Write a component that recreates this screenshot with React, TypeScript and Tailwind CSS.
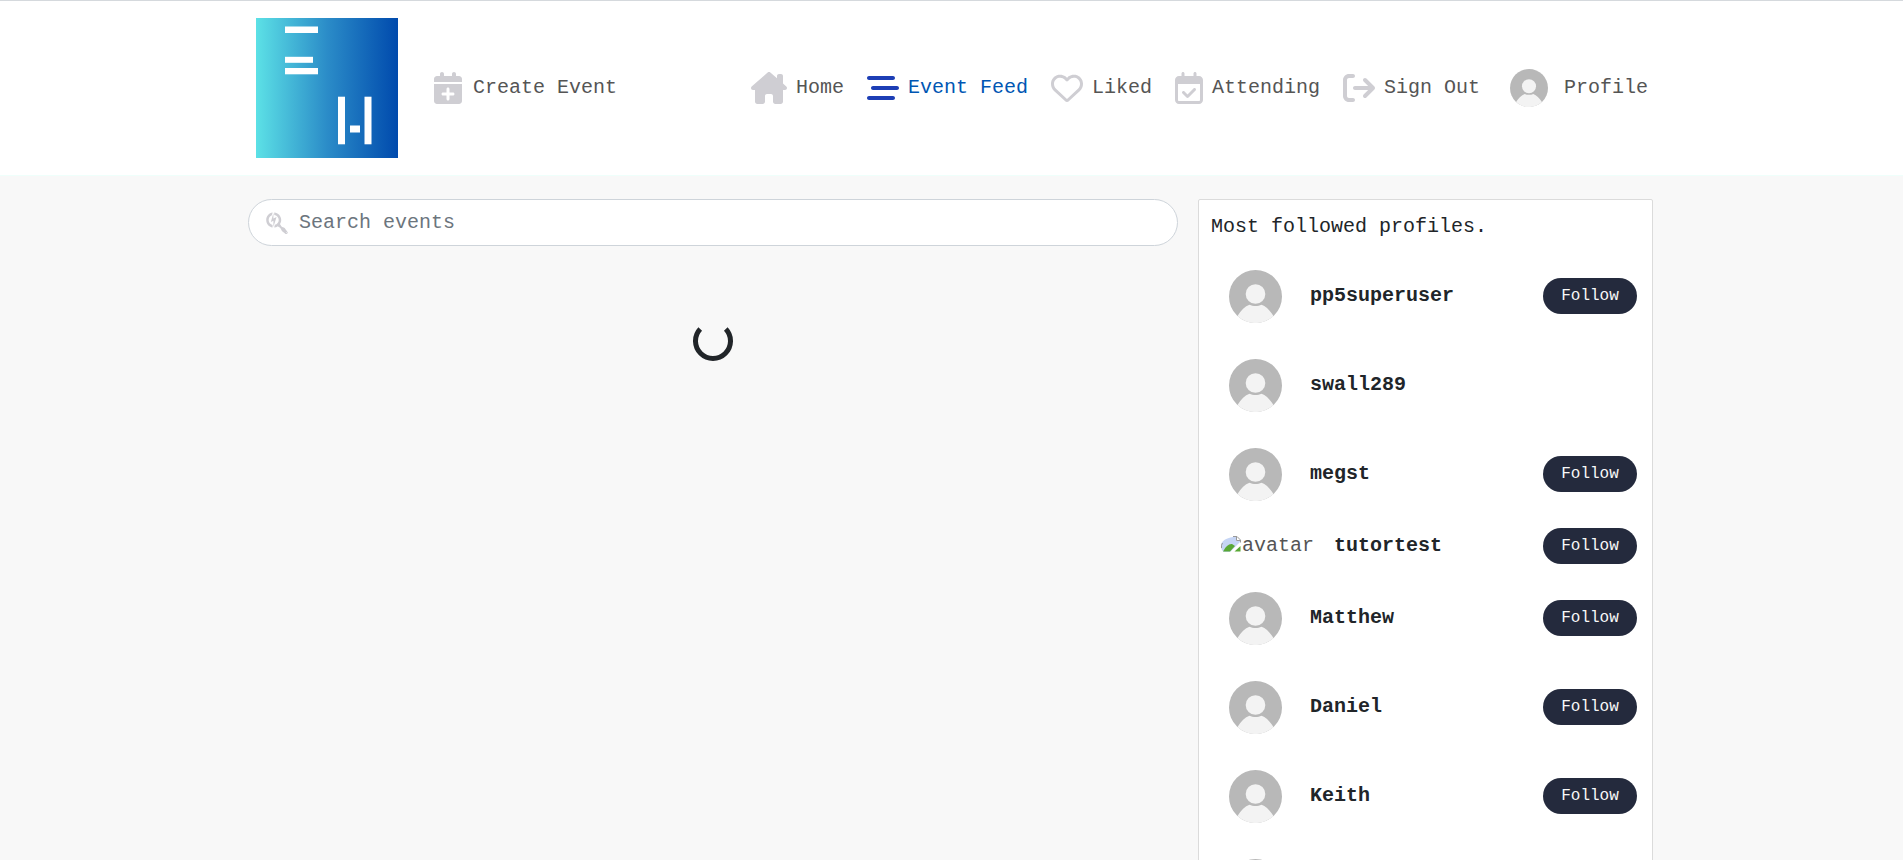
import type { ReactNode } from "react";
import {
  FaArrowRightFromBracket,
  FaBarsStaggered,
  FaCalendarPlus,
  FaHouseChimney,
  FaRegCalendarCheck,
  FaRegHeart,
  FaSearchengin,
} from "react-icons/fa6";

type Profile = { id: number; name?: string; followable?: boolean; missingImage?: boolean };

const profiles: Profile[] = [
  { id: 1, name: "pp5superuser", followable: true },
  { id: 2, name: "swall289" },
  { id: 3, name: "megst", followable: true },
  { id: 4, name: "tutortest", followable: true, missingImage: true },
  { id: 5, name: "Matthew", followable: true },
  { id: 6, name: "Daniel", followable: true },
  { id: 7, name: "Keith", followable: true },
  { id: 8 },
];

function Avatar({ className }: { className: string }) {
  return (
    <svg viewBox="0 0 53 53" className={className} aria-hidden="true">
      <circle cx="26.5" cy="26.5" r="26.5" fill="#b8b8b8" />
      <circle cx="26.5" cy="24" r="9.8" fill="#f3f3f3" />
      <path
        d="M8.5 46C12 40.5 16 36.3 20.5 34.8C24 36.4 29 36.4 32.5 34.8C37 36.3 41 40.5 44.5 46A26.5 26.5 0 0 1 8.5 46Z"
        fill="#f3f3f3"
      />
    </svg>
  );
}

function MissingImage() {
  return (
    <svg viewBox="0 0 20 17" className="mb-[5px] h-[17px] w-5 shrink-0" aria-hidden="true">
      <path d="M0 11C0 6 5 3 12 2H15V6H19V7L9 17H3Q0 15 0 11Z" fill="#c5d5f5" />
      <path d="M2 16.5Q6 8.5 11 9L14 11L9 16.5Z" fill="#58a835" />
      <path d="M19.5 11V16.5H13.5Z" fill="#58a835" />
      <path d="M0.5 13Q0 10 1.5 8M12 1.5H16L19.5 5V7.5M15.5 1.5V5.5H19.5" fill="none" stroke="#999" />
    </svg>
  );
}

function Logo() {
  return (
    <svg viewBox="0 0 142 140" className="h-[140px] w-[142px]" role="img" aria-label="Logo">
      <defs>
        <linearGradient id="logo-fill" x1="0" x2="1" y1="0" y2="0">
          <stop offset="0" stopColor="#5ce1e6" />
          <stop offset="0.5" stopColor="#2b8cc8" />
          <stop offset="1" stopColor="#004aad" />
        </linearGradient>
      </defs>
      <rect width="142" height="140" fill="url(#logo-fill)" />
      <g fill="#fff">
        <rect x="29" y="8.5" width="33" height="6.5" />
        <rect x="29" y="38.8" width="28" height="6" />
        <rect x="29" y="50" width="33" height="6.3" />
        <rect x="82" y="78.7" width="7" height="47.6" />
        <rect x="108.5" y="78.7" width="7" height="47.6" />
        <rect x="94" y="107.5" width="10" height="7" />
      </g>
    </svg>
  );
}

function NavLink({ icon, children, active }: { icon: ReactNode; children: string; active?: boolean }) {
  return (
    <a
      href="#"
      className={`flex items-center gap-[9px] whitespace-nowrap ${active ? "text-[#0056b3]" : "text-[#555555]"}`}
    >
      <span className={active ? "text-[#1d3eb5]" : "text-[#cfced3]"}>{icon}</span>
      <span className="pb-px">{children}</span>
    </a>
  );
}

export default function App() {
  return (
    <div className="min-h-screen bg-[#f8f8f8] font-['Liberation_Mono',monospace] text-xl leading-[30px] text-[#212529]">
      <header className="border-t border-b border-t-[#d5d9dd] border-b-[#effffb] bg-white">
        <nav className="mx-auto flex max-w-[1439px] items-center py-[17px] pr-[23px] pl-6">
          <a href="#" className="shrink-0">
            <Logo />
          </a>
          <a href="#" className="ml-9 flex items-center gap-[11px] whitespace-nowrap text-[#555555]">
            <FaCalendarPlus className="h-8 w-7 text-[#cfced3]" />
            <span>Create Event</span>
          </a>
          <div className="ml-auto flex items-center gap-[23px]">
            <NavLink icon={<FaHouseChimney className="h-8 w-9" />}>Home</NavLink>
            <NavLink active icon={<FaBarsStaggered className="size-8" />}>
              Event Feed
            </NavLink>
            <NavLink icon={<FaRegHeart className="size-8" />}>Liked</NavLink>
            <NavLink icon={<FaRegCalendarCheck className="h-8 w-7" />}>Attending</NavLink>
            <NavLink icon={<FaArrowRightFromBracket className="size-8" />}>Sign Out</NavLink>
            <a href="#" className="ml-[7px] flex items-center gap-4 text-[#555555]">
              <Avatar className="size-[38px]" />
              <span className="pb-px">Profile</span>
            </a>
          </div>
        </nav>
      </header>

      <main className="mx-auto flex max-w-[1439px] items-start gap-5 pt-[23px] pr-[18px] pl-4">
        <section className="min-w-0 flex-1">
          <form
            role="search"
            className="flex h-[47px] items-center gap-[11px] rounded-full border border-[#ced4da] bg-white px-[17px]"
          >
            <FaSearchengin className="h-6 w-[22px] shrink-0 text-[#cfced3]" aria-hidden="true" />
            <input
              type="text"
              aria-label="Search events"
              placeholder="Search events"
              className="min-w-0 flex-1 bg-transparent outline-none placeholder:text-[#6c757d]"
            />
          </form>
          <div className="flex justify-center pt-[75px]" role="status" aria-label="Loading">
            <svg viewBox="0 0 40 40" className="size-10" aria-hidden="true">
              <path d="M7.2 8A17.5 17.5 0 1 0 32.8 8" fill="none" stroke="#212529" strokeWidth="5" />
            </svg>
          </div>
        </section>

        <aside className="w-[455px] shrink-0 rounded-xs border border-[#dbdbdb] bg-white">
          <h2 className="px-3 pt-3 pb-[10px]">Most followed profiles.</h2>
          <ul>
            {profiles.map((profile) => (
              <li
                key={profile.id}
                className={`flex items-center pr-[15px] pb-px ${profile.missingImage ? "h-[55px] pl-[22px]" : "h-[89px] pl-[30px]"}`}
              >
                <a href="#" className="flex items-center text-[#555555]">
                  {profile.missingImage ? (
                    <span className="flex items-center gap-px">
                      <MissingImage />
                      avatar
                    </span>
                  ) : (
                    <Avatar className="size-[53px]" />
                  )}
                </a>
                {profile.name && (
                  <strong className={`pb-px ${profile.missingImage ? "ml-5" : "ml-7"}`}>{profile.name}</strong>
                )}
                {profile.followable && (
                  <button
                    type="button"
                    className="ml-auto h-9 w-[94px] rounded-full bg-[#242a3d] text-base text-[#f8f8f8]"
                  >
                    Follow
                  </button>
                )}
              </li>
            ))}
          </ul>
        </aside>
      </main>
    </div>
  );
}
